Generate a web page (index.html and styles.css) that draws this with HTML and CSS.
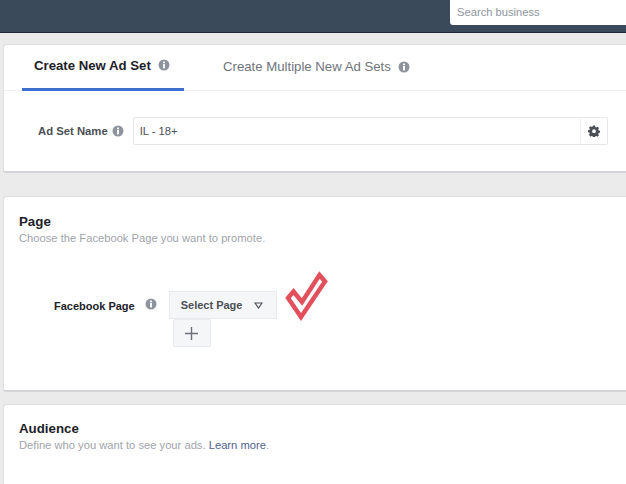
FILE: index.html
```html
<!DOCTYPE html>
<html lang="en">
<head>
<meta charset="utf-8">
<title>Create New Ad Set</title>
<link rel="stylesheet" href="styles.css">
</head>
<body>
<header class="topbar">
  <div class="search">Search business</div>
</header>
<main class="content">
  <section class="card card-name">
    <div class="tabs">
      <div class="tab tab-active">
        <span>Create New Ad Set</span>
        <svg class="info" viewBox="0 0 12 12"><circle cx="6" cy="6" r="5.5" fill="#8d949e"/><rect x="5" y="5" width="2" height="4.4" fill="#fff"/><rect x="5" y="2.6" width="2" height="1.6" fill="#fff"/></svg>
      </div>
      <div class="tab tab-idle">
        <span>Create Multiple New Ad Sets</span>
        <svg class="info" viewBox="0 0 12 12"><circle cx="6" cy="6" r="5.5" fill="#8d949e"/><rect x="5" y="5" width="2" height="4.4" fill="#fff"/><rect x="5" y="2.6" width="2" height="1.6" fill="#fff"/></svg>
      </div>
    </div>
    <div class="name-row">
      <span class="name-label">Ad Set Name</span>
      <svg class="info info-small" viewBox="0 0 12 12"><circle cx="6" cy="6" r="5.5" fill="#8d949e"/><rect x="5" y="5" width="2" height="4.4" fill="#fff"/><rect x="5" y="2.6" width="2" height="1.6" fill="#fff"/></svg>
      <div class="name-input">
        <span class="name-value">IL - 18+</span>
        <span class="gear-box">
          <svg class="gear" viewBox="0 0 12 12"><path fill="#4b4f56" fill-rule="evenodd" d="M5 .6h2l.3 1.5 1 .4 1.3-.8 1.4 1.4-.8 1.3.4 1 1.400.3v2l-1.400.3-.4 1 .8 1.300-1.400 1.400-1.300-.8-1 .4-.3 1.500H5l-.3-1.500-1-.4-1.300.8L1 9.800l.8-1.300-.4-1L0 7.200v-2l1.400-.3.4-1L1 2.600 2.400 1.200l1.300.8 1-.4zM6 4.300a1.900 1.900 0 1 0 0 3.800 1.900 1.900 0 0 0 0-3.800z"/></svg>
        </span>
      </div>
    </div>
  </section>

  <section class="card card-page">
    <h2 class="card-title">Page</h2>
    <p class="card-sub">Choose the Facebook Page you want to promote.</p>
    <div class="page-row">
      <span class="page-label">Facebook Page</span>
      <svg class="info info-page" viewBox="0 0 12 12"><circle cx="6" cy="6" r="5.5" fill="#8d949e"/><rect x="5" y="5" width="2" height="4.4" fill="#fff"/><rect x="5" y="2.6" width="2" height="1.6" fill="#fff"/></svg>
      <div class="page-controls">
        <div class="select-btn">
          <span>Select Page</span>
          <svg class="caret" viewBox="0 0 9 7"><path d="M1 1h7L4.500 6z" fill="none" stroke="#4b4f56" stroke-width="1.200"/></svg>
        </div>
        <div class="plus-btn">
          <svg class="plus" viewBox="0 0 13 13"><path d="M6.500 0v13M0 6.500h13" stroke="#6b7078" stroke-width="1.400"/></svg>
        </div>
        <svg class="check" viewBox="0 0 43 51"><path d="M3 27 L8.500 20.500 L17 31 L34.500 4 L40 10.500 L16 46 Z" fill="#fff" stroke="#e2505c" stroke-width="4.500" stroke-linejoin="miter"/></svg>
      </div>
    </div>
  </section>

  <section class="card card-audience">
    <h2 class="card-title">Audience</h2>
    <p class="card-sub">Define who you want to see your ads. <a class="learn" href="#">Learn more</a>.</p>
  </section>
</main>
</body>
</html>
```
FILE: styles.css
```css
* { box-sizing: border-box; }
html, body { margin: 0; height: 484px; overflow: hidden; }
body {
  background: #ebebeb;
  font-family: "Liberation Sans", Arial, sans-serif;
  color: #1d2129;
}
.topbar {
  height: 33px;
  background: #3b4a5a;
  border-bottom: 1px solid #1f2a36;
  display: flex;
  justify-content: flex-end;
  align-items: flex-start;
}
.search {
  width: 176px;
  height: 25px;
  background: #fff;
  border-radius: 0 0 0 3px;
  padding: 5px 0 0 7px;
  font-size: 11.2px;
  line-height: 15px;
  color: #8d949e;
}
.content {
  padding: 11px 0 0 3px;
  display: flex;
  flex-direction: column;
}
.card {
  background: #fff;
  border: 1px solid #dddfe2;
  border-right: 0;
  border-bottom: 2px solid #d3d5d8;
  border-radius: 3px 0 0 3px;
}
.card-name { height: 129px; margin-bottom: 23px; }
.card-page { height: 196px; margin-bottom: 12px; padding: 16px 15px 0; }
.card-audience { height: 90px; padding: 15px 15px 0; }
.tabs {
  display: flex;
  height: 46px;
  padding-left: 18px;
  border-bottom: 1px solid #eff0f2;
}
.tab {
  display: flex;
  align-items: center;
  gap: 7px;
  height: 46px;
  font-size: 13.2px;
  padding-bottom: 3px;
}
.tab-active {
  width: 162px;
  padding-left: 12px;
  font-weight: 700;
  color: #1d2129;
  border-bottom: 3px solid #3b70d0;
}
.tab-idle { margin-left: 39px; color: #6f747c; }
.info { width: 12px; height: 12px; flex: none; }
.name-row {
  display: flex;
  align-items: center;
  margin: 26px 0 0 34px;
  height: 28px;
}
.name-label { font-size: 11.3px; font-weight: 700; color: #4b4f56; white-space: nowrap; }
.info-small { margin-left: 4px; }
.name-input {
  flex: none;
  width: 475px;
  height: 28px;
  margin-left: 9px;
  border: 1px solid #e6e7ea;
  border-radius: 2px;
  display: flex;
  align-items: center;
  justify-content: space-between;
}
.name-value { font-size: 11.2px; color: #4b4f56; padding-left: 6px; }
.gear-box {
  width: 27px;
  height: 26px;
  border-left: 1px solid #eff0f2;
  display: flex;
  align-items: center;
  justify-content: center;
}
.gear { width: 12px; height: 12px; }
.card-title {
  margin: 0;
  font-size: 13.3px;
  line-height: 18px;
  font-weight: 700;
  color: #1d2129;
}
.card-sub {
  margin: 0;
  font-size: 11.2px;
  line-height: 15px;
  color: #a0a4ab;
}
.learn { color: #4e6290; text-decoration: none; }
.page-row {
  display: flex;
  align-items: flex-start;
  margin: 45px 0 0 35px;
}
.page-label { font-size: 11px; font-weight: 700; color: #1d2129; margin-top: 9px; white-space: nowrap; }
.info-page { margin: 7px 0 0 10px; }
.page-controls {
  position: relative;
  margin-left: 12px;
  display: flex;
  flex-direction: column;
  align-items: flex-start;
}
.select-btn {
  width: 108px;
  height: 28px;
  background: #f5f6f7;
  border: 1px solid #e9eaed;
  display: flex;
  align-items: center;
  gap: 12px;
  padding-left: 11px;
  font-size: 11px;
  font-weight: 700;
  color: #4b4f56;
}
.caret { width: 9px; height: 7px; }
.plus-btn {
  width: 38px;
  height: 28px;
  margin-left: 4px;
  background: #f5f6f7;
  border: 1px solid #e9eaed;
  border-radius: 2px;
  display: flex;
  align-items: center;
  justify-content: center;
}
.plus { width: 13px; height: 13px; }
.check {
  position: absolute;
  left: 116px;
  top: -20px;
  width: 43px;
  height: 51px;
}
```
